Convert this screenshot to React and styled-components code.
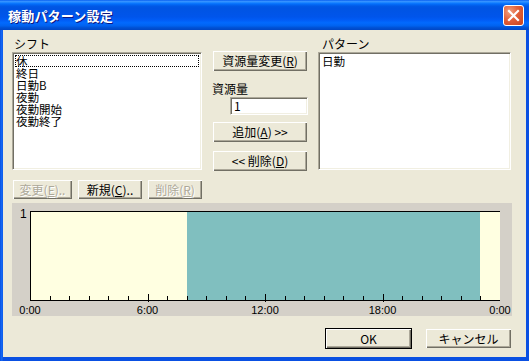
import styled, { createGlobalStyle } from "styled-components"

const GlobalStyle = createGlobalStyle`
  html, body {
    margin: 0;
    padding: 0;
    background: #fff;
  }
  body {
    font-family: "Noto Sans CJK JP", "Noto Sans", sans-serif;
    font-size: 12px;
  }
`

const Window = styled.div`
  width: 529px;
  height: 361px;
  display: flex;
  flex-direction: column;
  background: #0842d8;
`

const TitleBar = styled.div`
  height: 30px;
  flex: none;
  display: flex;
  align-items: center;
  justify-content: space-between;
  padding: 0 5px 0 8px;
  box-sizing: border-box;
  background: linear-gradient(180deg, #0058ee 0%, #3a93ff 4%, #288eff 7%, #127dff 10%, #036ffc 13%, #0262ee 17%, #0057e5 22%, #0054e3 28%, #0055eb 56%, #005bf5 66%, #026afe 76%, #0062ef 86%, #0052d6 92%, #0046c4 100%);
`

const Title = styled.span`
  color: #fff;
  font-weight: bold;
  font-size: 13px;
  letter-spacing: 0.2px;
  text-shadow: 1px 1px 0 #0a1883;
`

const CloseButton = styled.div`
  width: 21px;
  height: 21px;
  box-sizing: border-box;
  border: 1px solid #fff;
  border-radius: 3px;
  background: radial-gradient(circle at 30% 30%, #f0a080 0%, #e2603a 45%, #c8421c 100%);
  display: flex;
  align-items: center;
  justify-content: center;
`

const Frame = styled.div`
  flex: 1;
  display: flex;
  padding: 0 3px 4px 3px;
  background: linear-gradient(90deg, #0a4fe0 0px, #166df8 2px, #0a50e2 3px);
`

const Client = styled.div`
  flex: 1;
  background: #ece9d8;
  padding: 6px 14px 0 9px;
  display: flex;
  flex-direction: column;
`

const TopSection = styled.div`
  display: flex;
  align-items: flex-start;
  gap: 10px;
  height: 134px;
`

const Column = styled.div`
  width: ${p => p.$w}px;
  display: flex;
  flex-direction: column;
`

const MiddleColumn = styled.div`
  width: 96px;
  display: flex;
  flex-direction: column;
  padding-top: 14px;
`

const Label = styled.div`
  height: 16px;
  line-height: 16px;
  padding-left: ${p => p.$indent || 2}px;
  color: #000;
`

const ListBox = styled.div`
  box-sizing: border-box;
  height: 118px;
  background: #fff;
  border: 1px solid;
  border-color: #aca899 #fff #fff #aca899;
  box-shadow: inset 1px 1px 0 #716f64, inset -1px -1px 0 #f1efe2;
  padding: 2px 2px;
`

const ListItem = styled.div`
  height: 12px;
  line-height: 12px;
  font-size: 11.5px;
  padding-left: 1px;
  white-space: nowrap;
  color: #000;
  outline: ${p => (p.$focus ? "1px dotted #000" : "none")};
  outline-offset: -1px;
`

const Button = styled.button`
  box-sizing: border-box;
  width: ${p => p.$w}px;
  height: ${p => p.$h || 22}px;
  margin: ${p => p.$mt || 0}px 0 0 0;
  padding: 0;
  font-family: inherit;
  font-size: 12px;
  line-height: 1;
  color: ${p => (p.disabled ? "#aca899" : "#000")};
  text-shadow: ${p => (p.disabled ? "1px 1px 0 #fff" : "none")};
  background: #ece9d8;
  border: 1px solid ${p => (p.$default ? "#000" : "transparent")};
  box-shadow: inset 1px 1px 0 #fff, inset -1px -1px 0 #716f64, inset -2px -2px 0 #aca899;
  display: flex;
  align-items: center;
  justify-content: center;
  white-space: nowrap;

  u {
    text-decoration: underline;
    text-underline-offset: 1px;
  }
`

const FieldLabel = styled.div`
  margin-top: 10px;
  height: 13px;
  line-height: 13px;
`

const TextInput = styled.div`
  box-sizing: border-box;
  margin: 2px 0 0 18px;
  width: 78px;
  height: 18px;
  background: #fff;
  border: 1px solid;
  border-color: #aca899 #fff #fff #aca899;
  box-shadow: inset 1px 1px 0 #716f64, inset -1px -1px 0 #f1efe2;
  padding: 0 3px;
  line-height: 16px;
`

const ButtonRow = styled.div`
  display: flex;
  gap: 4px;
  margin-top: 9px;
`

const ChartPanel = styled.div`
  margin-top: 3px;
  width: 500px;
  height: 113px;
  background: #d4d0c8;
`

const Footer = styled.div`
  display: flex;
  justify-content: flex-end;
  gap: 13px;
  margin-top: 12px;
`

const shifts = ["休", "終日", "日勤B", "夜勤", "夜勤開始", "夜勤終了"]

const PLOT_L = 18
const PLOT_R = 488
const PLOT_T = 8
const PLOT_B = 97
const hx = h => PLOT_L + (h * (PLOT_R - PLOT_L)) / 24

function Chart() {
  const ticks = []
  for (let h = 1; h < 24; h++) {
    const major = h % 6 === 0
    const x = Math.round(hx(h)) + 0.5
    ticks.push(
      <line key={h} x1={x} x2={x} y1={major ? PLOT_B - 6 : PLOT_B - 4} y2={major ? PLOT_B + 2 : PLOT_B} stroke="#000" strokeWidth="1" />
    )
  }
  const labels = [0, 6, 12, 18, 24]
  return (
    <svg width="500" height="113" style={{ display: "block" }}>
      <rect x={PLOT_L} y={PLOT_T} width={PLOT_R - PLOT_L} height={PLOT_B - PLOT_T} fill="#ffffe1" />
      <rect x={Math.round(hx(8))} y={PLOT_T + 1} width={Math.round(hx(23)) - Math.round(hx(8))} height={PLOT_B - PLOT_T - 1} fill="#80bfbf" />
      <line x1={PLOT_L} x2={PLOT_R} y1={PLOT_T + 0.5} y2={PLOT_T + 0.5} stroke="#000" />
      <line x1={PLOT_L + 0.5} x2={PLOT_L + 0.5} y1={PLOT_T} y2={PLOT_B} stroke="#000" />
      <line x1={PLOT_L} x2={PLOT_R} y1={PLOT_B + 0.5} y2={PLOT_B + 0.5} stroke="#000" />
      {ticks}
      <text x="8" y="15" fontSize="12" fontFamily="Liberation Sans, sans-serif">1</text>
      {labels.map(h => (
        <text key={h} x={hx(h)} y="111" fontSize="11" textAnchor="middle" fontFamily="Liberation Sans, sans-serif">
          {`${h % 24}:00`}
        </text>
      ))}
    </svg>
  )
}

export default function App() {
  return (
    <>
      <GlobalStyle />
      <Window>
        <TitleBar>
          <Title>稼動パターン設定</Title>
          <CloseButton>
            <svg width="13" height="13" viewBox="0 0 13 13">
              <path d="M2 2 L11 11 M11 2 L2 11" stroke="#fff" strokeWidth="2.2" strokeLinecap="square" />
            </svg>
          </CloseButton>
        </TitleBar>
        <Frame>
          <Client>
            <TopSection>
              <Column $w={190}>
                <Label>シフト</Label>
                <ListBox>
                  {shifts.map((s, i) => (
                    <ListItem key={s} $focus={i === 0}>{s}</ListItem>
                  ))}
                </ListBox>
              </Column>
              <MiddleColumn>
                <Button $w={96}>資源量変更(<u>R</u>)</Button>
                <FieldLabel>資源量</FieldLabel>
                <TextInput>1</TextInput>
                <Button $w={96} $mt={6}>追加(<u>A</u>) &gt;&gt;</Button>
                <Button $w={96} $mt={7}>&lt;&lt; 削除(<u>D</u>)</Button>
              </MiddleColumn>
              <Column $w={193}>
                <Label $indent={4}>パターン</Label>
                <ListBox>
                  <ListItem>日勤</ListItem>
                </ListBox>
              </Column>
            </TopSection>
            <ButtonRow>
              <Button $w={61} $h={21} disabled>変更(<u>E</u>)..</Button>
              <Button $w={66} $h={21}>新規(<u>C</u>)..</Button>
              <Button $w={56} $h={21} disabled>削除(<u>R</u>)</Button>
            </ButtonRow>
            <ChartPanel>
              <Chart />
            </ChartPanel>
            <Footer>
              <Button $w={87} $h={21} $default>OK</Button>
              <Button $w={87} $h={21}>キャンセル</Button>
            </Footer>
          </Client>
        </Frame>
      </Window>
    </>
  )
}
